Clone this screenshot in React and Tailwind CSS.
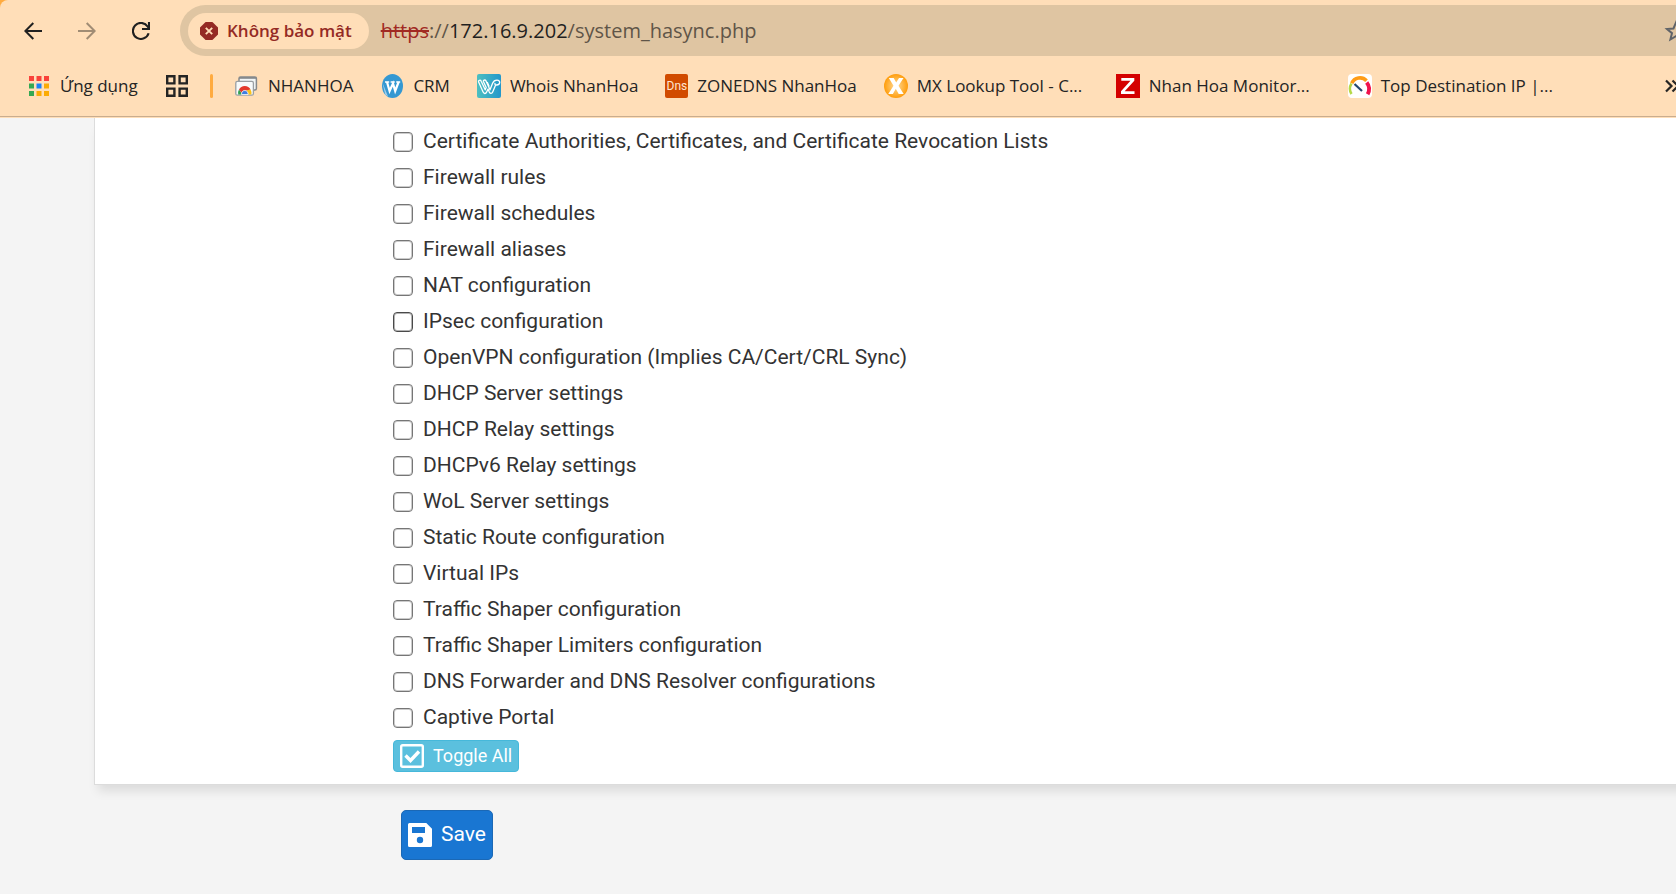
import React from "react";

const OPTIONS = [
  "Certificate Authorities, Certificates, and Certificate Revocation Lists",
  "Firewall rules",
  "Firewall schedules",
  "Firewall aliases",
  "NAT configuration",
  "IPsec configuration",
  "OpenVPN configuration (Implies CA/Cert/CRL Sync)",
  "DHCP Server settings",
  "DHCP Relay settings",
  "DHCPv6 Relay settings",
  "WoL Server settings",
  "Static Route configuration",
  "Virtual IPs",
  "Traffic Shaper configuration",
  "Traffic Shaper Limiters configuration",
  "DNS Forwarder and DNS Resolver configurations",
  "Captive Portal",
];

function BackIcon() {
  return (
    <svg viewBox="0 0 18 18" className="size-[18px]" fill="none" stroke="currentColor" strokeWidth="2">
      <path d="M18 9H1.8M9.3 1L1.3 9l8 8" />
    </svg>
  );
}

function ForwardIcon() {
  return (
    <svg viewBox="0 0 18 18" className="size-[18px]" fill="none" stroke="currentColor" strokeWidth="2">
      <path d="M0 9h16.2M8.7 1l8 8-8 8" />
    </svg>
  );
}

function ReloadIcon() {
  return (
    <svg viewBox="0 0 18 18" className="size-[18px]" fill="none" stroke="currentColor" strokeWidth="2.1">
      <path d="M16.6 11.2A8 8 0 1 1 15.6 4.5L17 6.3" />
      <path d="M17 0v7h-7" />
    </svg>
  );
}

function DangerIcon() {
  return (
    <svg viewBox="0 0 18 18" className="size-[18px]">
      <path d="M5.6 0h6.8L18 5.6v6.8L12.4 18H5.6L0 12.4V5.6z" fill="#942a24" />
      <path d="M5.8 5.8l6.4 6.4M12.2 5.8l-6.4 6.4" stroke="#ffdeb8" strokeWidth="1.9" />
    </svg>
  );
}

function AppsIcon() {
  return (
    <svg viewBox="0 0 20 20" className="size-5">
      <path d="M0 0h5v5H0zM7.5 0h5v5h-5zM15 0h5v5h-5z" fill="#f9423a" />
      <path d="M0 7.5h5v5H0zM0 15h5v5H0z" fill="#34a853" />
      <path d="M7.5 7.5h5v5h-5z" fill="#1a82f7" />
      <path d="M15 7.5h5v5h-5zM15 15h5v5h-5zM7.5 15h5v5h-5z" fill="#fbab04" />
    </svg>
  );
}

function GridIcon() {
  return (
    <svg viewBox="0 0 22 22" className="size-[22px]" fill="none" stroke="#242424" strokeWidth="2.4">
      <path d="M1.2 1.2h7.2v7.2H1.2zM13.6 1.2h7.2v7.2h-7.2zM1.2 13.6h7.2v7.2H1.2zM13.6 13.6h7.2v7.2h-7.2z" />
    </svg>
  );
}

function RemoteIcon() {
  return (
    <svg viewBox="0 0 24 24" className="size-6">
      <rect x="4" y="3" width="17.4" height="13" rx="1.5" fill="#f1f5f6" stroke="#85898c" strokeWidth="1.5" />
      <path d="M4 3h17.4v1.8H4z" fill="#85898c" />
      <rect x=".8" y="7.4" width="17.6" height="13.8" rx="1.5" fill="#f7fafb" stroke="#9a9fa3" strokeWidth="1.3" />
      <path d="M3.2 20.6A6.6 6.6 0 0 1 4 15.4l3.600 5.200z" fill="#31a350" />
      <path d="M4 15.6a6.500 6.500 0 0 1 11.600 0L9.900 17.200l-2.700 2.600z" fill="#e3392d" />
      <path d="M15.500 15.400a6.800 6.800 0 0 1 .9 5.200h-4.800l.5-4.300z" fill="#fbc116" />
      <path d="M6.600 20.600a3.300 3.300 0 1 1 6.400 0z" fill="#3d7de0" stroke="#fff" strokeWidth=".8" />
    </svg>
  );
}

function CrmIcon() {
  return (
    <svg viewBox="0 0 24 24" className="size-6">
      <ellipse cx="12.500" cy="12" rx="10.500" ry="12" fill="#3598d2" />
      <path d="M2.400 8.500L5.200 20.500l2.800 2z" fill="#9fcdeb" />
      <path d="M5 8h4.200M10.600 8h4.200M16.200 8h4" stroke="#fff" strokeWidth="1.600" />
      <path d="M7 8l2.600 9L13 9.500l2.200 7.500L18.600 8" fill="none" stroke="#fff" strokeWidth="2.200" />
    </svg>
  );
}

function WhoisIcon() {
  return (
    <svg viewBox="0 0 24 24" className="size-6">
      <defs>
        <linearGradient id="whois" x1="0" x2="1">
          <stop offset="0" stopColor="#4dbfc0" />
          <stop offset="1" stopColor="#2397cb" />
        </linearGradient>
      </defs>
      <rect width="24" height="24" rx="2" fill="url(#whois)" />
      <path
        d="M1.500 7.800c-.4-1.600 2-2.300 2.700-.6l4 8.600 1-2.300-2.800-6c-.5-1.500 1.800-2.200 2.600-.6l4 8.900 2.600-6.600c1-2.300 2.400-3 4.400-3 4 0 3.300 4.800-.4 4.800-1.500 0-2-.6-1.500-2M1.500 7.800l4.600 10.300c.9 2 2.700 1.700 3.500 0l1.400-3 1.300 3c.9 1.800 2.700 1.700 3.400-.1l2.700-6.500M12.200 12.500l-2-4.400"
        fill="none"
        stroke="#fff"
        strokeWidth="1.300"
        strokeLinejoin="round"
      />
    </svg>
  );
}

function DnsIcon() {
  return (
    <span className="flex h-6 w-[23px] items-center justify-center rounded-xs bg-[#d14b00] font-['Roboto',sans-serif] text-xs text-[#ffe5d0]">
      Dns
    </span>
  );
}

function MxIcon() {
  return (
    <svg viewBox="0 0 24 24" className="size-6">
      <defs>
        <radialGradient id="mx">
          <stop offset="0" stopColor="#ffdc9c" />
          <stop offset="1" stopColor="#ff9d0c" />
        </radialGradient>
      </defs>
      <circle cx="12" cy="12" r="12" fill="url(#mx)" />
      <path d="M4.8 4h4.900l2.500 4.600L15 4h4.500l-5 7.700 5.200 8.300h-5l-2.900-5.200L8.900 20H4.300l5.200-8.300z" fill="#fff" />
    </svg>
  );
}

function ZabbixIcon() {
  return (
    <svg viewBox="0 0 24 24" className="size-6">
      <path d="M0 0h24v24H0z" fill="#d40000" />
      <path d="M5.3 4h13v2.700L8.700 17.200h9.800V20H5v-2.800L14.500 6.800H5.300z" fill="#fff" />
    </svg>
  );
}

function GaugeIcon() {
  return (
    <svg viewBox="0 0 24 24" className="size-6" fill="none" strokeWidth="3">
      <rect width="24" height="24" rx="4" fill="#fff" />
      <path d="M3.500 20A10 10 0 0 1 3.500 9.500" stroke="#b5d947" strokeWidth="2.500" />
      <path d="M3.700 9.300A9 9 0 0 1 18.500 6.700" stroke="#ff9c16" strokeWidth="3.600" />
      <path d="M18.700 8.500a10 10 0 0 1 .9 11.700" stroke="#f0134d" strokeWidth="4" />
      <path d="M6.500 10l7.500 7" stroke="#24476f" strokeWidth="2.200" />
    </svg>
  );
}

const BOOKMARKS = [
  { name: "NHANHOA", Icon: RemoteIcon },
  { name: "CRM", Icon: CrmIcon },
  { name: "Whois NhanHoa", Icon: WhoisIcon },
  { name: "ZONEDNS NhanHoa", Icon: DnsIcon },
  { name: "MX Lookup Tool - C...", Icon: MxIcon, long: true },
  { name: "Nhan Hoa Monitor...", Icon: ZabbixIcon, long: true },
  { name: "Top Destination IP |...", Icon: GaugeIcon, long: true },
];

function AddressRow() {
  return (
    <div className="flex items-center pt-[5px] pl-6">
      <div className="flex w-[156px] shrink-0 items-center gap-9 text-[#202020]">
        <button type="button" aria-label="Back">
          <BackIcon />
        </button>
        <button type="button" aria-label="Forward" className="text-[#a08c74]">
          <ForwardIcon />
        </button>
        <button type="button" aria-label="Reload">
          <ReloadIcon />
        </button>
      </div>
      <div className="flex h-[51px] min-w-0 flex-1 items-center rounded-l-full bg-[#dfc5a2] pl-2">
        <button
          type="button"
          className="flex h-9 shrink-0 items-center gap-[9px] rounded-full bg-[#ffdeb8] pr-[17px] pl-3 text-[17px] font-semibold text-[#942a24]"
        >
          <DangerIcon />
          Không bảo mật
        </button>
        <div className="ml-3 flex-1 text-xl whitespace-nowrap text-[#5f5548]">
          <span className="text-[#a12a22] line-through">https</span>://
          <span className="text-[#1f1f1f]">172.16.9.202</span>/system_hasync.php
        </div>
        <button type="button" aria-label="Bookmark this page" className="-mr-3 shrink-0 text-[#5f6368]">
          <svg viewBox="0 0 24 24" className="size-6" fill="none" stroke="currentColor" strokeWidth="2">
            <path d="M12 3.500l2.500 6 6.500.5-5 4.200 1.600 6.300L12 17.100l-5.600 3.400L8 14.200 3 10l6.500-.5z" />
          </svg>
        </button>
      </div>
    </div>
  );
}

function BookmarkBar() {
  return (
    <nav className="flex h-[60px] items-center pb-[1px] pl-[29px] text-[17px] whitespace-nowrap text-[#242424]">
      <a href="#apps" className="flex w-[137px] shrink-0 items-center gap-[11px]">
        <AppsIcon />
        Ứng dụng
      </a>
      <button type="button" aria-label="Tab groups" className="shrink-0">
        <GridIcon />
      </button>
      <span className="mr-[22px] ml-[22px] h-6 w-[3px] shrink-0 rounded-full bg-[#ffab40]" />
      <div className="flex min-w-0 flex-1 gap-[27px]">
        {BOOKMARKS.map(({ name, Icon, long }) => (
          <a key={name} href="#bookmark" className="flex shrink-0 items-center gap-[9px]">
            <Icon />
            <span className={long ? "w-[172px]" : ""}>{name}</span>
          </a>
        ))}
      </div>
      <button type="button" aria-label="More bookmarks" className="-mr-1 shrink-0">
        <svg viewBox="0 0 16 16" className="size-4" fill="none" stroke="currentColor" strokeWidth="2.200">
          <path d="M2 2.500L7.500 8 2 13.500M8.500 2.500L14 8l-5.500 5.500" />
        </svg>
      </button>
    </nav>
  );
}

export default function App() {
  return (
    <div className="min-h-screen overflow-x-hidden bg-[#f4f4f4] font-['Roboto',sans-serif]">
      <div className="bg-[#ffab40]">
        <header className="rounded-tl-lg border-b border-[#ffdeb8] bg-[#ffdeb8] font-['Open_Sans','Noto_Sans',sans-serif]">
          <div className="border-b border-[#c9ad8f]">
            <AddressRow />
            <BookmarkBar />
          </div>
        </header>
      </div>
      <main>
        <section className="-mr-4 ml-[94px] border-b border-l border-[#dcdcdc] bg-white pt-[6px] pb-3 pl-[298px] shadow-[0_10px_10px_-4px_rgba(0,0,0,0.1)]">
          <ul className="text-[21px] text-[#333333]">
            {OPTIONS.map((name, i) => (
              <li key={name}>
                <label className="flex h-9 items-center gap-[10px]">
                  <input
                    type="checkbox"
                    className={`size-5 shrink-0 appearance-none rounded-[4px] border bg-white ${
                      i === 5
                        ? "border-[#4a4a4a] shadow-[inset_0_0_0_1px_#b4b4b4]"
                        : "border-[#767676] shadow-[inset_0_0_0_1px_#cccccc]"
                    }`}
                  />
                  {name}
                </label>
              </li>
            ))}
          </ul>
          <button
            type="button"
            className="mt-1 flex h-8 items-center gap-[9px] rounded-[4px] border border-[#46b8da] bg-[#5bc0de] px-[6px] text-lg text-white"
          >
            <svg viewBox="0 0 24 24" className="size-6" fill="none" stroke="currentColor">
              <rect x="1.2" y="1.2" width="21.6" height="21.6" rx="1.5" strokeWidth="2.4" />
              <path d="M5.5 11.5l5 5 8.500-9" strokeWidth="3.400" />
            </svg>
            Toggle All
          </button>
        </section>
        <button
          type="button"
          className="mt-[25px] ml-[401px] flex h-[50px] items-center gap-[9px] rounded-[5px] border border-[#1b68b5] bg-[#1976d2] px-[6px] text-[21px] text-white"
        >
          <svg viewBox="0 0 24 24" className="size-6">
            <path
              fillRule="evenodd"
              fill="currentColor"
              d="M1.500 0h16.800L24 5.700v16.800a1.500 1.500 0 0 1-1.500 1.500h-21A1.500 1.500 0 0 1 0 22.500v-21A1.500 1.500 0 0 1 1.500 0zM4 4v6h13V4zM12 13.800a3.200 3.200 0 1 0 0 6.400 3.200 3.200 0 0 0 0-6.400z"
            />
          </svg>
          Save
        </button>
      </main>
    </div>
  );
}
